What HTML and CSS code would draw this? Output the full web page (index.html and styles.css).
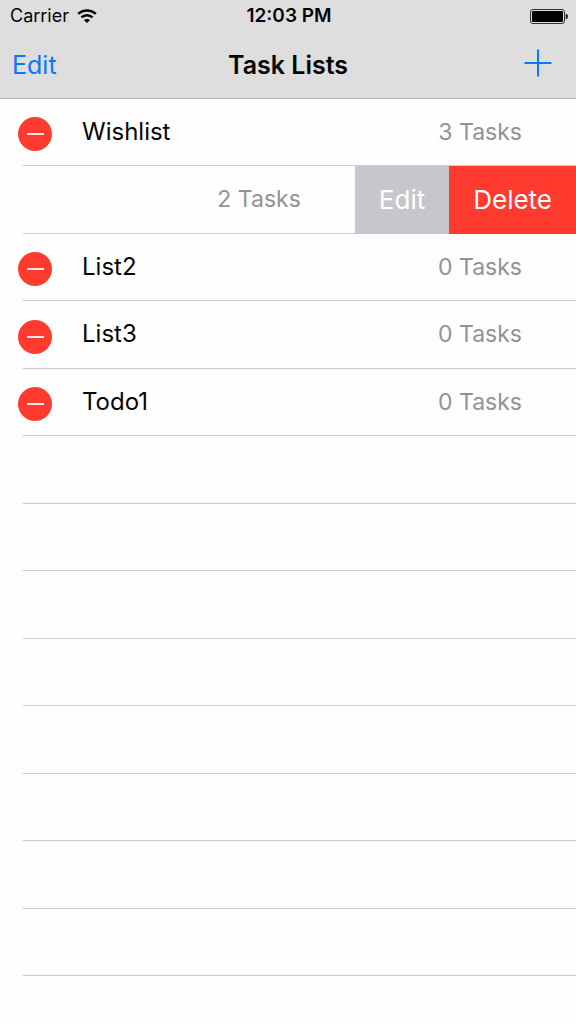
FILE: index.html
```html
<!DOCTYPE html>
<html lang="en">
<head>
<meta charset="utf-8">
<meta name="viewport" content="width=device-width, initial-scale=1">
<title>Task Lists</title>
<link rel="stylesheet" href="styles.css">
</head>
<body>
<header class="header">
  <div class="status">
    <div class="carrier">
      <span>Carrier</span>
      <svg class="wifi" width="20" height="14" viewBox="0 0 20 14" aria-hidden="true">
        <path d="M1.2 4.9C6 .2 14 .2 18.8 4.9M4.4 8.4c3.2-3 8-3 11.2 0" fill="none" stroke="#000" stroke-width="2.5"/>
        <path d="M10 14 6.9 11c1.8-1.5 4.4-1.5 6.2 0z" fill="#000"/>
      </svg>
    </div>
    <span class="time">12:03 PM</span>
    <svg class="battery" width="38" height="15" viewBox="0 0 38 15" aria-hidden="true">
      <rect x=".5" y=".5" width="34" height="14" rx="2.5" fill="none" stroke="#333"/>
      <rect x="2" y="2" width="31" height="11" rx="1" fill="#000"/>
      <path d="M36 5c2.4.6 2.4 4.4 0 5z" fill="#222" stroke="#222" stroke-width=".6"/>
    </svg>
  </div>
  <nav class="navbar">
    <button class="nav-button" type="button">Edit</button>
    <h1 class="title">Task Lists</h1>
    <button class="nav-button add" type="button" aria-label="Add list">
      <svg width="28" height="28" viewBox="0 0 28 28" aria-hidden="true"><path d="M14 .5v27M.5 14h27" stroke="#0879fb" stroke-width="2"/></svg>
    </button>
  </nav>
</header>
<main class="main">
  <ul class="list">
    <li class="row">
      <button class="remove" type="button" aria-label="Remove Wishlist"></button>
      <div class="cell"><span>Wishlist</span><span class="count">3 Tasks</span></div>
    </li>
    <li class="row swiped">
      <div class="cell"><span class="count">2 Tasks</span></div>
      <button class="action edit" type="button">Edit</button>
      <button class="action delete" type="button">Delete</button>
    </li>
    <li class="row">
      <button class="remove" type="button" aria-label="Remove List2"></button>
      <div class="cell"><span>List2</span><span class="count">0 Tasks</span></div>
    </li>
    <li class="row">
      <button class="remove" type="button" aria-label="Remove List3"></button>
      <div class="cell"><span>List3</span><span class="count">0 Tasks</span></div>
    </li>
    <li class="row">
      <button class="remove" type="button" aria-label="Remove Todo1"></button>
      <div class="cell"><span>Todo1</span><span class="count">0 Tasks</span></div>
    </li>
    <li class="row"></li>
    <li class="row"></li>
    <li class="row"></li>
    <li class="row"></li>
    <li class="row"></li>
    <li class="row"></li>
    <li class="row"></li>
    <li class="row"></li>
  </ul>
</main>
</body>
</html>
```
FILE: styles.css
```css
* { box-sizing: border-box; }

body {
  margin: 0;
  min-height: 100vh;
  background: #fefefe;
  color: #050505;
  font-family: Inter, "Liberation Sans", sans-serif;
  font-size: 24px;
  line-height: 32px;
}

button {
  padding: 0;
  border: 0;
  background: none;
  font: inherit;
  cursor: pointer;
}

svg { display: block; }

.header {
  background: #dedede;
  border-bottom: 1px solid #b2b2b2;
}

.status,
.navbar {
  display: grid;
  grid-template-columns: 1fr auto 1fr;
  align-items: center;
}

.status {
  height: 32px;
  padding: 0 8px 0 10px;
  font-size: 18px;
  line-height: 24px;
}

.carrier {
  display: flex;
  align-items: center;
  gap: 8px;
}

.time {
  font-size: 19px;
  font-weight: 600;
}

.battery { justify-self: end; }

.navbar {
  height: 66px;
  padding: 0 12px;
  font-size: 25px;
}

.nav-button {
  justify-self: start;
  color: #0879fb;
}

.add {
  justify-self: end;
  padding: 0 12px 4px;
}

.title {
  margin: 0;
  font-size: 25px;
  font-weight: 600;
}

.list {
  margin: 0;
  padding: 0;
  list-style: none;
}

.row {
  display: flex;
  height: 67px;
  padding-left: 18px;
  background: linear-gradient(#cbcacd, #cbcacd) 23px 100% / 100% 1px no-repeat;
}

.row:nth-child(even) { height: 68px; }

.cell {
  flex: 1;
  display: flex;
  align-items: center;
  justify-content: space-between;
  padding: 0 54px 2px 30px;
}

.count {
  color: #929295;
  font-size: 23px;
}

.remove {
  display: grid;
  place-items: center;
  align-self: center;
  width: 34px;
  height: 34px;
  margin-top: 3px;
  border-radius: 50%;
  background: #ff3b30;
}

.remove::before {
  content: "";
  width: 17px;
  height: 2px;
  background: #ffe9e7;
}

.swiped .cell { justify-content: flex-end; }

.action {
  padding: 0 24px;
  color: #fff;
  font-size: 26px;
}

.edit { background: #c7c6cd; }
.delete { background: #ff3b30; }
```
